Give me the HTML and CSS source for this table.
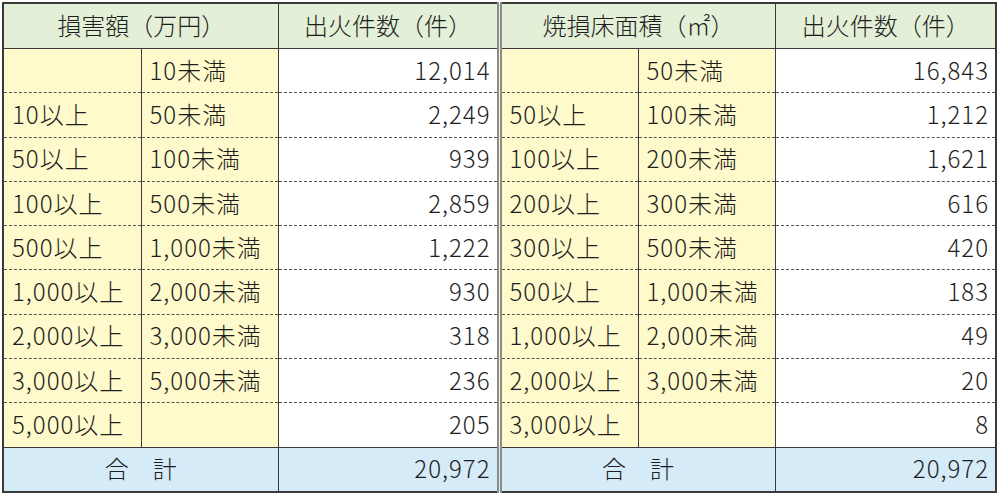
FILE: index.html
```html
<!DOCTYPE html>
<html lang="ja">
<head>
<meta charset="utf-8">
<link rel="stylesheet" href="styles.css">
</head>
<body>
<table class="fire">
  <colgroup>
    <col class="c-from"><col class="c-to"><col class="c-num">
    <col class="c-from2"><col class="c-to2"><col class="c-num">
  </colgroup>
  <thead>
    <tr>
      <th colspan="2">損害額（万円）</th>
      <th>出火件数（件）</th>
      <th colspan="2" class="split">焼損床面積（㎡）</th>
      <th>出火件数（件）</th>
    </tr>
  </thead>
  <tbody>
    <tr class="first">
      <td class="rng"></td><td class="rng">10未満</td><td class="num">12,014</td>
      <td class="rng split"></td><td class="rng">50未満</td><td class="num">16,843</td>
    </tr>
    <tr>
      <td class="rng">10以上</td><td class="rng">50未満</td><td class="num">2,249</td>
      <td class="rng split">50以上</td><td class="rng">100未満</td><td class="num">1,212</td>
    </tr>
    <tr>
      <td class="rng">50以上</td><td class="rng">100未満</td><td class="num">939</td>
      <td class="rng split">100以上</td><td class="rng">200未満</td><td class="num">1,621</td>
    </tr>
    <tr>
      <td class="rng">100以上</td><td class="rng">500未満</td><td class="num">2,859</td>
      <td class="rng split">200以上</td><td class="rng">300未満</td><td class="num">616</td>
    </tr>
    <tr>
      <td class="rng">500以上</td><td class="rng">1,000未満</td><td class="num">1,222</td>
      <td class="rng split">300以上</td><td class="rng">500未満</td><td class="num">420</td>
    </tr>
    <tr>
      <td class="rng">1,000以上</td><td class="rng">2,000未満</td><td class="num">930</td>
      <td class="rng split">500以上</td><td class="rng">1,000未満</td><td class="num">183</td>
    </tr>
    <tr>
      <td class="rng">2,000以上</td><td class="rng">3,000未満</td><td class="num">318</td>
      <td class="rng split">1,000以上</td><td class="rng">2,000未満</td><td class="num">49</td>
    </tr>
    <tr>
      <td class="rng">3,000以上</td><td class="rng">5,000未満</td><td class="num">236</td>
      <td class="rng split">2,000以上</td><td class="rng">3,000未満</td><td class="num">20</td>
    </tr>
    <tr>
      <td class="rng">5,000以上</td><td class="rng"></td><td class="num">205</td>
      <td class="rng split">3,000以上</td><td class="rng"></td><td class="num">8</td>
    </tr>
  </tbody>
  <tfoot>
    <tr>
      <td colspan="2" class="label">合　計</td><td class="num">20,972</td>
      <td colspan="2" class="label split">合　計</td><td class="num">20,972</td>
    </tr>
  </tfoot>
</table>
</body>
</html>
```

FILE: styles.css
```css
html, body {
  margin: 0;
  padding: 0;
  background: #ffffff;
}

body {
  padding: 2px 0 0 2px;
  font-family: "Noto Sans CJK JP", "Noto Sans", sans-serif;
  color: #1e1e1e;
}

.fire {
  border-collapse: collapse;
  table-layout: fixed;
  width: 995px;
  border: 2px solid #3a3a3a;
  font-size: 24px;
  font-weight: 300;
  line-height: 1;
}

.c-from { width: 138px; }
.c-to { width: 137px; }
.c-num { width: 221px; }
.c-from2 { width: 139px; }
.c-to2 { width: 137px; }

.fire th,
.fire td {
  border-left: 1px solid #3a3a3a;
  border-right: 1px solid #3a3a3a;
  padding: 0 7px 0 8px;
  white-space: nowrap;
  font-weight: 300;
}

.fire th {
  height: 41px;
  padding-bottom: 3px;
  background: #e3efd6;
  text-align: center;
  border-bottom: 1px solid #3a3a3a;
}

.fire td {
  height: 41.3px;
  padding-bottom: 2px;
  letter-spacing: 1px;
}

.fire tbody tr + tr td {
  border-top: 1px dashed #555555;
}

.fire td.rng {
  background: #fffacb;
  text-align: left;
}

.fire td.num {
  background: #ffffff;
  text-align: right;
  padding-right: 6px;
}

.fire .split {
  border-left: 5px double #8c8c8c;
}

.fire tfoot td {
  background: #d5ebf8;
  border-top: 1px solid #3a3a3a;
}

.fire tfoot td.num {
  background: #d5ebf8;
}

.fire td.label {
  text-align: center;
  padding: 0 0 2px;
  letter-spacing: 0;
}
```
